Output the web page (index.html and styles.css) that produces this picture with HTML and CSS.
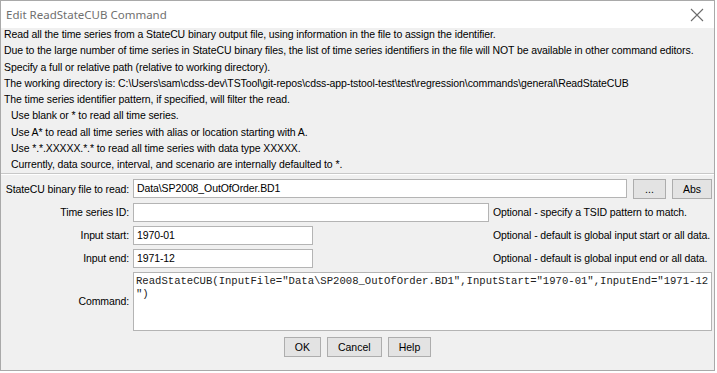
FILE: index.html
```html
<!DOCTYPE html>
<html lang="en">

<head>
    <meta charset="UTF-8">
    <title>Edit ReadStateCUB Command</title>
    <link rel="stylesheet" href="styles.css">
</head>

<body>
	<div class="window">
		<div class="titlebar">
			<span class="title">Edit ReadStateCUB Command</span>
			<span class="close">
				<svg width="14" height="14" viewBox="0 0 14 14"><path d="M1 1L13 13M13 1L1 13" stroke="#6b6b6b" stroke-width="1.1" fill="none"/></svg>
			</span>
		</div>
		<div class="content">
			<ul class="notes">
				<li>Read all the time series from a StateCU binary output file, using information in the file to assign the identifier.</li>
				<li>Due to the large number of time series in StateCU binary files, the list of time series identifiers in the file will NOT be available in other command editors.</li>
				<li>Specify a full or relative path (relative to working directory).</li>
				<li>The working directory is: C:\Users\sam\cdss-dev\TSTool\git-repos\cdss-app-tstool-test\test\regression\commands\general\ReadStateCUB</li>
				<li>The time series identifier pattern, if specified, will filter the read.</li>
				<li class="indent">Use blank or * to read all time series.</li>
				<li class="indent">Use A* to read all time series with alias or location starting with A.</li>
				<li class="indent">Use *.*.XXXXX.*.* to read all time series with data type XXXXX.</li>
				<li class="indent">Currently, data source, interval, and scenario are internally defaulted to *.</li>
			</ul>
			<div class="sep"></div>
			<div class="form">
				<label>StateCU binary file to read:</label>
				<div class="filerow">
					<div class="field wide">Data\SP2008_OutOfOrder.BD1</div>
					<button class="btn dots">...</button>
					<button class="btn abs">Abs</button>
				</div>

				<label>Time series ID:</label>
				<div class="field"></div>
				<span class="note">Optional - specify a TSID pattern to match.</span>

				<label>Input start:</label>
				<div class="field short">1970-01</div>
				<span class="note">Optional - default is global input start or all data.</span>

				<label>Input end:</label>
				<div class="field short">1971-12</div>
				<span class="note">Optional - default is global input end or all data.</span>

				<label>Command:</label>
				<div class="command">ReadStateCUB(InputFile="Data\SP2008_OutOfOrder.BD1",InputStart="1970-01",InputEnd="1971-12<br>")</div>
			</div>
			<div class="buttons">
				<button class="btn">OK</button>
				<button class="btn">Cancel</button>
				<button class="btn">Help</button>
			</div>
		</div>
	</div>
</body>

</html>
```

FILE: styles.css
```css
html,body,div,ul,li,p{margin:0;padding:0;}
li{list-style: none;}
body{background: #fff;font-family: "Liberation Sans", Arial, sans-serif;font-size: 10.5px;letter-spacing: -0.1px;color: #000;}
.window{width: 713px;height: 369px;border: 1px solid #a9a9a9;background: #f0f0f0;display: flex;flex-direction: column;overflow: hidden;}
.titlebar{height: 27px;flex: none;background: #fff;display: flex;align-items: center;justify-content: space-between;padding: 0 10px 0 5px;}
.title{font-family: "Noto Sans", sans-serif;font-size: 11.5px;letter-spacing: 0;color: #6f6f6f;}
.close{display: flex;}
.content{flex: 1;padding: 0 2px;}
.notes{margin-top: -2px;padding-left: 1px;}
.notes li{line-height: 16.3px;white-space: nowrap;}
.notes .indent{padding-left: 7px;}
.sep{margin: 0 -2px 4px -2px;border-top: 1px solid #c8c8c8;border-bottom: 1px solid #fff;}
.form{display: grid;grid-template-columns: 126px 356px minmax(0, 1fr);column-gap: 4px;row-gap: 4px;align-items: center;}
.form label{text-align: right;white-space: nowrap;}
.field{height: 19px;box-sizing: border-box;background: #fff;border: 1px solid #b4b4b4;padding: 0 3px;line-height: 17px;}
.field.short{width: 180px;}
.filerow{grid-column: 2 / 4;display: flex;align-items: center;gap: 6px;}
.field.wide{flex: 1;}
.note{white-space: nowrap;}
.command{grid-column: 2 / 4;height: 59px;box-sizing: border-box;background: #fff;border: 1px solid #b4b4b4;padding: 2px 2px;font-family: "Liberation Mono", "Courier New", monospace;font-size: 10.6px;letter-spacing: 0;line-height: 13px;color: #222;white-space: nowrap;overflow: hidden;}
.btn{height: 20px;box-sizing: border-box;background: #e3e3e3;border: 1px solid #adadad;font-family: "Liberation Sans", Arial, sans-serif;font-size: 10.5px;color: #000;padding: 0 10px;}
.dots{width: 33px;padding: 0;}
.abs{width: 40px;padding: 0;}
.buttons{display: flex;justify-content: center;gap: 6px;margin-top: 6px;}
```
